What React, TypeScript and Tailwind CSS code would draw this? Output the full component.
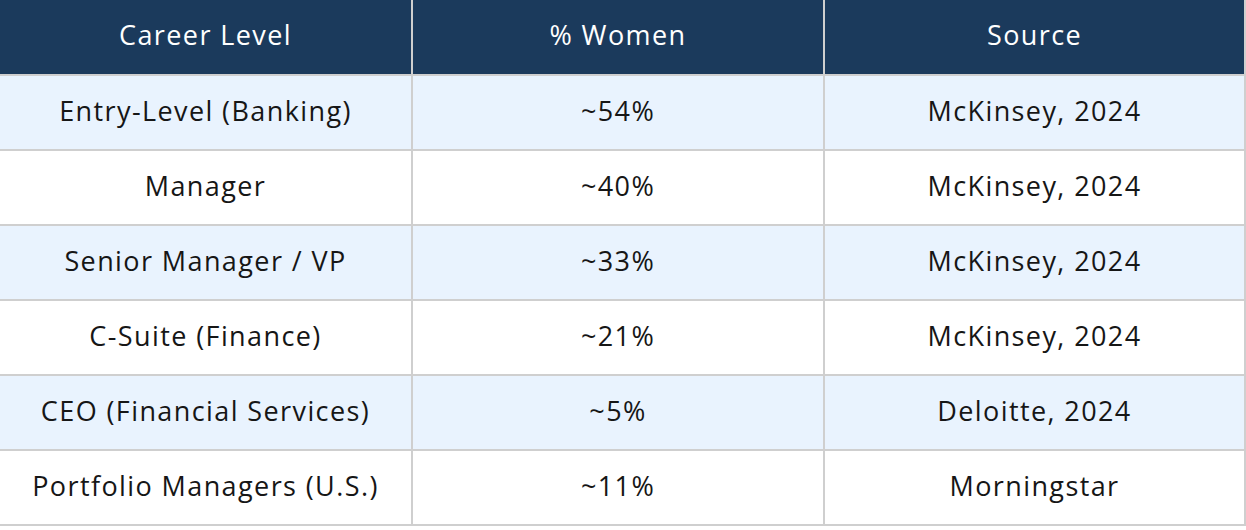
const rows = [
  { level: "Entry-Level (Banking)", pct: "~54%", source: "McKinsey, 2024" },
  { level: "Manager", pct: "~40%", source: "McKinsey, 2024" },
  { level: "Senior Manager / VP", pct: "~33%", source: "McKinsey, 2024" },
  { level: "C-Suite (Finance)", pct: "~21%", source: "McKinsey, 2024" },
  { level: "CEO (Financial Services)", pct: "~5%", source: "Deloitte, 2024" },
  { level: "Portfolio Managers (U.S.)", pct: "~11%", source: "Morningstar" },
];

export default function App() {
  return (
    <div className="w-[1246px] bg-white [font-family:'Open_Sans',sans-serif]">
      <table className="w-full table-fixed border-collapse text-center text-[27px] leading-none tracking-[1.4px]">
        <colgroup>
          <col className="w-[412px]" />
          <col className="w-[412px]" />
          <col />
        </colgroup>
        <thead>
          <tr className="h-[75px] bg-[#1b3a5c] text-white">
            <th className="border-r-2 border-b-2 border-[#cfcfcf] pb-[6px] font-normal">Career Level</th>
            <th className="border-r-2 border-b-2 border-[#cfcfcf] pb-[6px] font-normal">% Women</th>
            <th className="border-r-2 border-b-2 border-[#cfcfcf] pb-[6px] font-normal">Source</th>
          </tr>
        </thead>
        <tbody>
          {rows.map((row, i) => (
            <tr
              key={row.level}
              className={`h-[75px] text-[#161616] ${i % 2 === 0 ? "bg-[#e9f3fe]" : "bg-white"}`}
            >
              <td className="border-r-2 border-b-2 border-[#cfcfcf] pb-[5px]">{row.level}</td>
              <td className="border-r-2 border-b-2 border-[#cfcfcf] pb-[5px]">{row.pct}</td>
              <td className="border-r-2 border-b-2 border-[#cfcfcf] pb-[5px]">{row.source}</td>
            </tr>
          ))}
        </tbody>
      </table>
    </div>
  );
}
